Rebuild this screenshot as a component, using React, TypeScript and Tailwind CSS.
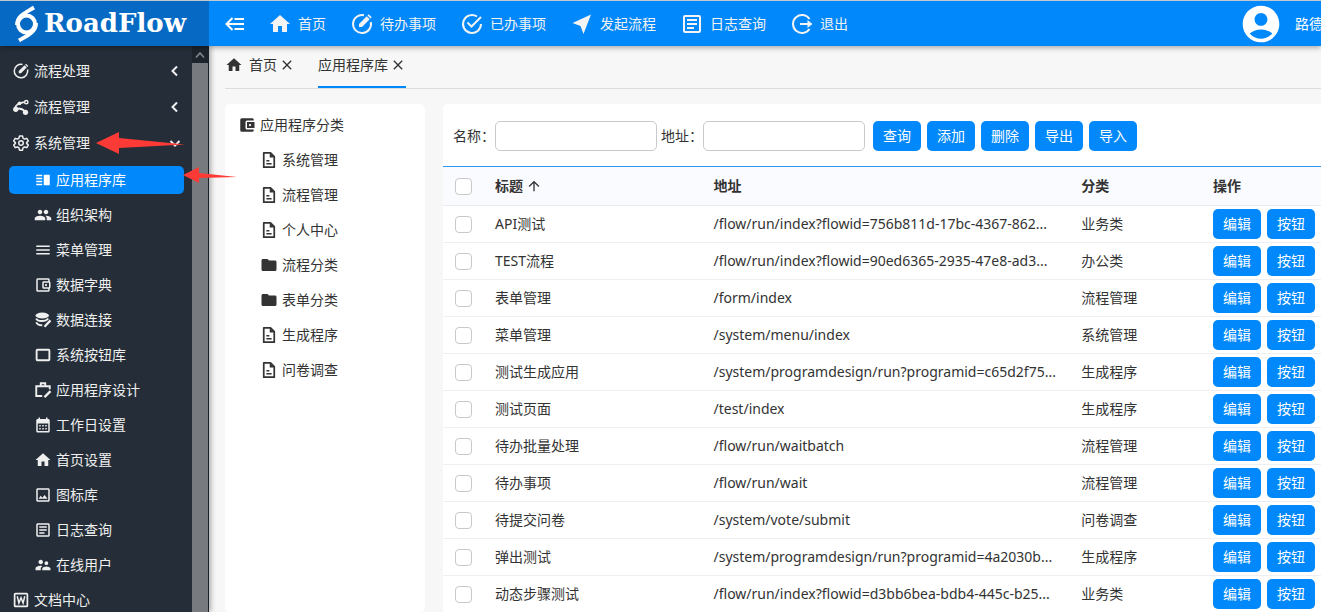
import type { ReactNode } from "react";
import {
    MdAccountBalanceWallet,
    MdAccountCircle,
    MdArrowUpward,
    MdCalendarMonth,
    MdClose,
    MdFolder,
    MdHome,
    MdMenu,
    MdOutlineAccountBalanceWallet,
    MdOutlineArticle,
    MdOutlineImage,
    MdPeople,
    MdSupervisorAccount,
    MdVerticalSplit,
} from "react-icons/md";

type IconProps = { className?: string };

function Svg({ className, children }: IconProps & { children: ReactNode }) {
    return (
        <svg viewBox="0 0 24 24" fill="none" stroke="currentColor" strokeWidth={2} className={className} aria-hidden="true">
            {children}
        </svg>
    );
}

function CollapseIcon({ className }: IconProps) {
    return (
        <Svg className={className}>
            <path d="M11.500 7H21M4 12h17M11.500 17H21" />
            <path d="M9.500 6 3.500 12l6 6" />
        </Svg>
    );
}

function EditCircleIcon({ className }: IconProps) {
    return (
        <Svg className={className}>
            <path d="M14 3.200A9 9 0 1 0 20.800 10" />
            <path d="M9 15v-3l7.700-7.700 3 3L12 15z" fill="currentColor" stroke="none" />
            <path d="m17.500 3.500 1.200-1.200 3 3-1.200 1.200z" fill="currentColor" stroke="none" />
        </Svg>
    );
}

function CheckCircleIcon({ className }: IconProps) {
    return (
        <Svg className={className}>
            <path d="M17 4.500A9 9 0 1 0 21 12" />
            <path d="m7.500 10.500 4 4L21 5" />
        </Svg>
    );
}

function SendIcon({ className }: IconProps) {
    return (
        <Svg className={className}>
            <path d="M21 2.500 2.500 11l8 3 3 8z" fill="currentColor" stroke="none" />
        </Svg>
    );
}

function LogoutIcon({ className }: IconProps) {
    return (
        <Svg className={className}>
            <path d="M19.500 7A9 9 0 1 0 19.500 17" />
            <path d="M10 12h9" />
            <path d="M17.500 8v8l5-4z" fill="currentColor" stroke="none" />
        </Svg>
    );
}

function FlowIcon({ className }: IconProps) {
    return (
        <Svg className={className}>
            <path d="M4 14C5 9 8 7 16 5.500M7 14c5 0 8 1 10 4" strokeWidth={2.500} />
            <circle cx="5" cy="15" r="3.500" fill="currentColor" stroke="none" />
            <circle cx="18" cy="19" r="3.500" fill="currentColor" stroke="none" />
            <circle cx="19" cy="5.500" r="2.200" />
            <circle cx="10" cy="7" r="2.500" fill="currentColor" stroke="none" />
        </Svg>
    );
}

function GearIcon({ className }: IconProps) {
    return (
        <Svg className={className}>
            <path
                d="M10 2.500h4l.7 3 2 1.200 3-.9 2 3.500L19.500 11.500v1l2.200 2.200-2 3.500-3-.9-2 1.200-.7 3h-4l-.7-3-2-1.200-3 .9-2-3.500 2.200-2.200v-1L2.300 9.300l2-3.500 3 .9 2-1.200z"
                strokeLinejoin="round"
            />
            <circle cx="12" cy="12" r="3" />
        </Svg>
    );
}

function DatabaseEditIcon({ className }: IconProps) {
    return (
        <Svg className={className}>
            <ellipse cx="11" cy="6" rx="9" ry="4" fill="currentColor" stroke="none" />
            <path d="M3 10c1 4 12 5 16 0M3 15c1 3 4 4 8 4" strokeWidth={2.500} />
            <path d="m14 21 8-8.500" strokeWidth={3} />
        </Svg>
    );
}

function RectangleIcon({ className }: IconProps) {
    return (
        <Svg className={className}>
            <rect x="3.500" y="5" width="17" height="14" rx="1" strokeWidth={2.500} />
        </Svg>
    );
}

function BriefcaseEditIcon({ className }: IconProps) {
    return (
        <Svg className={className}>
            <path d="M11 20H3V7h18v4M9 7V3h6v4" strokeWidth={2.500} />
            <path d="m14 21.500 8-8" strokeWidth={3} />
        </Svg>
    );
}

function WordIcon({ className }: IconProps) {
    return (
        <Svg className={className}>
            <rect x="3.500" y="3.500" width="17" height="17" rx="1" strokeWidth={2.300} />
            <path d="m7 7 2.200 9L12 9l2.800 7L17 7" />
        </Svg>
    );
}

function FileIcon({ className }: IconProps) {
    return (
        <Svg className={className}>
            <path d="M14 2.500H5v19h14V7.500z" strokeWidth={2.300} strokeLinejoin="round" />
            <path d="M13 2.500v6h6z" fill="currentColor" stroke="none" />
            <path d="M8.500 13h4M8.500 17h7" />
        </Svg>
    );
}

const navItems = [
    { icon: MdHome, label: "首页" },
    { icon: EditCircleIcon, label: "待办事项" },
    { icon: CheckCircleIcon, label: "已办事项" },
    { icon: SendIcon, label: "发起流程" },
    { icon: MdOutlineArticle, label: "日志查询" },
    { icon: LogoutIcon, label: "退出" },
];

const systemMenu = [
    { icon: MdVerticalSplit, label: "应用程序库", active: true },
    { icon: MdPeople, label: "组织架构" },
    { icon: MdMenu, label: "菜单管理" },
    { icon: MdOutlineAccountBalanceWallet, label: "数据字典" },
    { icon: DatabaseEditIcon, label: "数据连接" },
    { icon: RectangleIcon, label: "系统按钮库" },
    { icon: BriefcaseEditIcon, label: "应用程序设计" },
    { icon: MdCalendarMonth, label: "工作日设置" },
    { icon: MdHome, label: "首页设置" },
    { icon: MdOutlineImage, label: "图标库" },
    { icon: MdOutlineArticle, label: "日志查询" },
    { icon: MdSupervisorAccount, label: "在线用户" },
];

const categories = [
    { icon: FileIcon, label: "系统管理" },
    { icon: FileIcon, label: "流程管理" },
    { icon: FileIcon, label: "个人中心" },
    { icon: MdFolder, label: "流程分类" },
    { icon: MdFolder, label: "表单分类" },
    { icon: FileIcon, label: "生成程序" },
    { icon: FileIcon, label: "问卷调查" },
];

const rows = [
    { title: "API测试", url: "/flow/run/index?flowid=756b811d-17bc-4367-862...", type: "业务类" },
    { title: "TEST流程", url: "/flow/run/index?flowid=90ed6365-2935-47e8-ad3...", type: "办公类" },
    { title: "表单管理", url: "/form/index", type: "流程管理" },
    { title: "菜单管理", url: "/system/menu/index", type: "系统管理" },
    { title: "测试生成应用", url: "/system/programdesign/run?programid=c65d2f75...", type: "生成程序" },
    { title: "测试页面", url: "/test/index", type: "生成程序" },
    { title: "待办批量处理", url: "/flow/run/waitbatch", type: "流程管理" },
    { title: "待办事项", url: "/flow/run/wait", type: "流程管理" },
    { title: "待提交问卷", url: "/system/vote/submit", type: "问卷调查" },
    { title: "弹出测试", url: "/system/programdesign/run?programid=4a2030b...", type: "生成程序" },
    { title: "动态步骤测试", url: "/flow/run/index?flowid=d3bb6bea-bdb4-445c-b25...", type: "业务类" },
];

function Button({ children }: { children: ReactNode }) {
    return (
        <button type="button" className="h-[30px] w-12 shrink-0 rounded-[5px] bg-[#0188fb] text-white">
            {children}
        </button>
    );
}

function Checkbox({ label }: { label: string }) {
    return (
        <input type="checkbox" aria-label={label} className="block size-[17px] appearance-none rounded-[4px] border border-[#c9c9c9] bg-white checked:bg-[#0188fb]" />
    );
}

function MenuGroup({ icon: Icon, label, open, chevron = true }: { icon: (p: IconProps) => ReactNode; label: string; open?: boolean; chevron?: boolean }) {
    return (
        <button type="button" aria-expanded={open} className="flex h-9 w-full shrink-0 items-center gap-1 pr-[11px] pl-3">
            <Icon className="size-[18px]" />
            <span>{label}</span>
            {chevron && (
                <Svg className="ml-auto size-3">
                    {open ? <path d="m3 8 9 9 9-9" strokeWidth={4} /> : <path d="m16 3-9 9 9 9" strokeWidth={4} />}
                </Svg>
            )}
        </button>
    );
}

function Header() {
    return (
        <header className="z-10 flex h-[46px] shrink-0 border-t border-[#c3c9cf] bg-[#0188fb] text-white shadow-[0_1px_6px_rgba(0,0,0,0.4)]">
            <div className="flex w-[209px] shrink-0 items-center gap-1 bg-[#066ac4] pl-3">
                <svg viewBox="0 0 28 38" className="h-[38px] w-7 shrink-0" fill="none" stroke="currentColor" strokeWidth="4" aria-hidden="true">
                    <circle cx="14.500" cy="19" r="8.500" />
                    <path d="M5 20C5 11 13 8 22 2.500M24 18C24 27 16 30 7 35.500" />
                </svg>
                <span className="font-['DejaVu_Serif',serif] text-[26px] font-bold">RoadFlow</span>
            </div>
            <button type="button" aria-label="收起菜单" className="ml-[14px]">
                <CollapseIcon className="size-6" />
            </button>
            <nav className="ml-[21px] flex gap-6">
                {navItems.map(({ icon: Icon, label }) => (
                    <a key={label} href="#" className="flex items-center gap-[6px] text-[#f3f3f3]">
                        <Icon className="size-6" />
                        <span>{label}</span>
                    </a>
                ))}
            </nav>
            <div className="ml-auto flex w-[82px] shrink-0 items-center gap-3 overflow-hidden whitespace-nowrap">
                <MdAccountCircle className="size-11 shrink-0" />
                <span>路德</span>
            </div>
        </header>
    );
}

function Sidebar() {
    return (
        <aside className="z-[5] flex w-[209px] shrink-0 border-r border-[#1a222b] bg-[#252e38] text-[#efefef] shadow-[1px_0_6px_rgba(0,0,0,0.4)]">
            <div className="flex flex-1 flex-col overflow-hidden pt-[7px]">
                <MenuGroup icon={EditCircleIcon} label="流程处理" />
                <MenuGroup icon={FlowIcon} label="流程管理" />
                <MenuGroup icon={GearIcon} label="系统管理" open />
                <div className="flex flex-col gap-[7px] pt-[5px] pr-2 pb-[3px] pl-[9px]">
                    {systemMenu.map(({ icon: Icon, label, active }) => (
                        <a key={label} href="#" className={`flex h-7 items-center gap-1 rounded-[5px] pl-[25px] ${active ? "bg-[#0188fb] text-white" : ""}`}>
                            <Icon className="size-[18px]" />
                            <span>{label}</span>
                        </a>
                    ))}
                </div>
                <MenuGroup icon={WordIcon} label="文档中心" chevron={false} />
            </div>
            <div className="flex w-4 flex-col bg-[#777a7f]" aria-hidden="true">
                <div className="flex h-[17px] items-center justify-center bg-[#1d242c] text-[#85888c]">
                    <Svg className="size-3">
                        <path d="m4 17 8-9 8 9" strokeWidth={3} />
                    </Svg>
                </div>
            </div>
        </aside>
    );
}

function Tabs() {
    return (
        <div className="flex gap-[23px] border-b border-[#dcdcdc]">
            <a href="#" className="flex h-[42px] items-center pb-1">
                <MdHome className="size-[18px]" />
                <span className="ml-[6px]">首页</span>
                <MdClose className="ml-[2px] size-4" />
            </a>
            <a href="#" className="flex h-[42px] items-center border-b-2 border-[#0188fb] pb-[2px]">
                <span>应用程序库</span>
                <MdClose className="ml-[2px] size-4" />
            </a>
        </div>
    );
}

function CategoryTree() {
    return (
        <div className="w-[200px] shrink-0 rounded-[5px] bg-white pt-[3px]">
            <div className="flex h-[35px] items-center gap-1 pl-[13px]">
                <MdAccountBalanceWallet className="size-[18px]" />
                <span>应用程序分类</span>
            </div>
            <ul className="pl-[35px]">
                {categories.map(({ icon: Icon, label }) => (
                    <li key={label} className="flex h-[35px] items-center gap-1">
                        <Icon className="size-[18px]" />
                        <span>{label}</span>
                    </li>
                ))}
            </ul>
        </div>
    );
}

function AppList() {
    return (
        <div className="min-w-0 flex-1 overflow-hidden rounded-tl-[5px] bg-white">
            <div className="flex items-center px-[10px] pt-[17px] pb-[15px]">
                <label htmlFor="name" className="w-[42px]">名称：</label>
                <input id="name" type="text" className="h-[30px] w-[162px] rounded-[5px] border border-[#c9c9c9] px-2" />
                <label htmlFor="address" className="ml-1 w-[42px]">地址：</label>
                <input id="address" type="text" className="h-[30px] w-[162px] rounded-[5px] border border-[#c9c9c9] px-2" />
                <div className="ml-2 flex gap-[6px]">
                    <Button>查询</Button>
                    <Button>添加</Button>
                    <Button>删除</Button>
                    <Button>导出</Button>
                    <Button>导入</Button>
                </div>
            </div>
            <table className="w-full table-fixed border-separate border-spacing-0 text-left whitespace-nowrap">
                <thead className="bg-[#fafbff]">
                    <tr className="h-10">
                        <th className="w-[42px] border-t border-b border-t-[#2b97f0] border-b-[#e9ebf0] pl-3">
                            <Checkbox label="全选" />
                        </th>
                        <th className="w-1/4 border-t border-b border-t-[#2b97f0] border-b-[#e9ebf0] pl-[10px]">
                            <span className="flex items-center gap-[3px]">
                                标题
                                <MdArrowUpward className="size-4" />
                            </span>
                        </th>
                        <th className="border-t border-b border-t-[#2b97f0] border-b-[#e9ebf0] pl-[9px]">地址</th>
                        <th className="w-[15%] border-t border-b border-t-[#2b97f0] border-b-[#e9ebf0] pl-[10px]">分类</th>
                        <th className="w-[118px] border-t border-b border-t-[#2b97f0] border-b-[#e9ebf0] pl-[10px]">操作</th>
                    </tr>
                </thead>
                <tbody>
                    {rows.map((row) => (
                        <tr key={row.title} className="h-[37px]">
                            <td className="border-b border-[#eeeff2] pl-3">
                                <Checkbox label={row.title} />
                            </td>
                            <td className="border-b border-[#eeeff2] pl-[10px]">{row.title}</td>
                            <td className="overflow-hidden border-b border-[#eeeff2] pl-[9px]">{row.url}</td>
                            <td className="border-b border-[#eeeff2] pl-[10px]">{row.type}</td>
                            <td className="border-b border-[#eeeff2] pl-[10px]">
                                <div className="flex gap-[6px]">
                                    <Button>编辑</Button>
                                    <Button>按钮</Button>
                                </div>
                            </td>
                        </tr>
                    ))}
                </tbody>
            </table>
        </div>
    );
}

export default function App() {
    return (
        <div className="relative flex h-screen flex-col overflow-hidden bg-[#f7f7f7] font-['Noto_Sans','Noto_Sans_CJK_SC',sans-serif] text-sm text-[#333]">
            <Header />
            <div className="flex min-h-0 flex-1">
                <Sidebar />
                <main className="flex min-w-0 flex-1 flex-col pl-4">
                    <Tabs />
                    <div className="flex min-h-0 flex-1 gap-[18px] pt-[15px]">
                        <CategoryTree />
                        <AppList />
                    </div>
                </main>
            </div>
            <svg viewBox="0 0 144 56" className="pointer-events-none absolute top-[130px] left-[95px] z-20 h-14 w-36" fill="#fd3a36" aria-hidden="true">
                <path d="M1 13 24 2v6l66 6.500-66 3.500v6z" />
                <path d="m88 45 16-8v6l38 4-38 1v5z" />
            </svg>
        </div>
    );
}
